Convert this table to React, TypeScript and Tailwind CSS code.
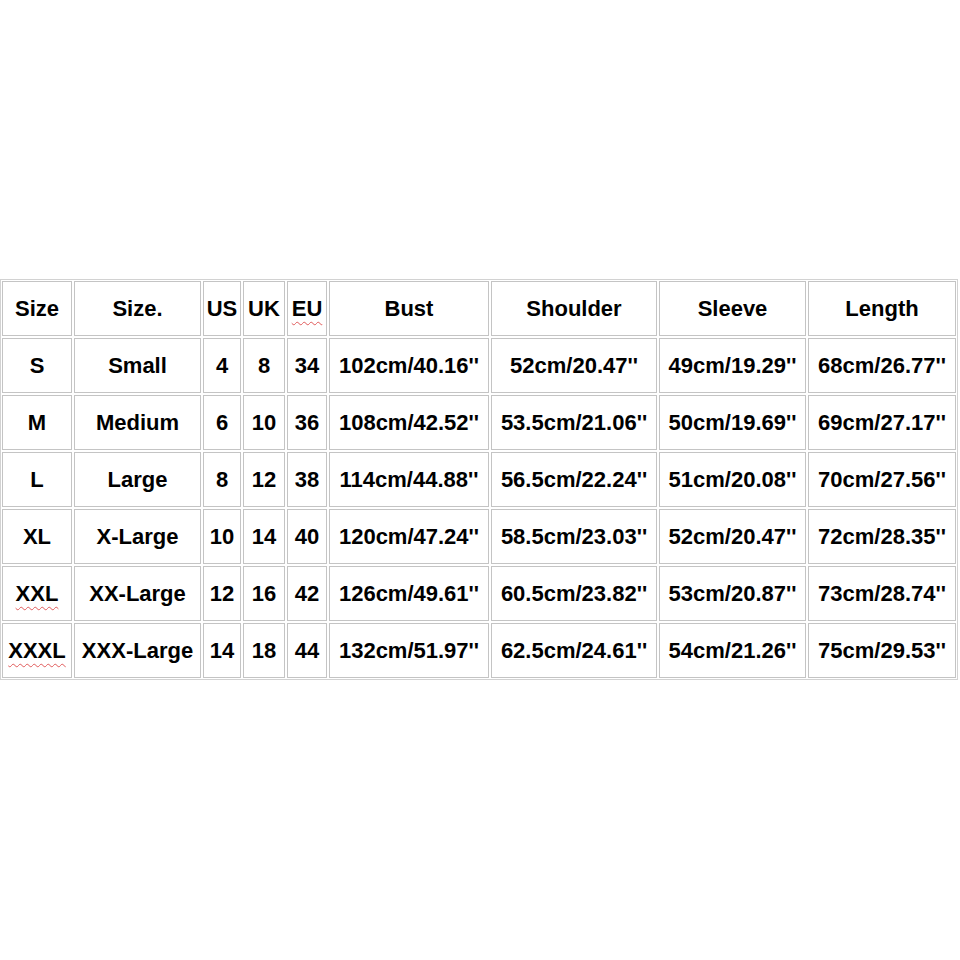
import React from "react";

const header = ["Size", "Size.", "US", "UK", "EU", "Bust", "Shoulder", "Sleeve", "Length"];
const rows: string[][] = [
  ["S", "Small", "4", "8", "34", "102cm/40.16''", "52cm/20.47''", "49cm/19.29''", "68cm/26.77''"],
  ["M", "Medium", "6", "10", "36", "108cm/42.52''", "53.5cm/21.06''", "50cm/19.69''", "69cm/27.17''"],
  ["L", "Large", "8", "12", "38", "114cm/44.88''", "56.5cm/22.24''", "51cm/20.08''", "70cm/27.56''"],
  ["XL", "X-Large", "10", "14", "40", "120cm/47.24''", "58.5cm/23.03''", "52cm/20.47''", "72cm/28.35''"],
  ["XXL", "XX-Large", "12", "16", "42", "126cm/49.61''", "60.5cm/23.82''", "53cm/20.87''", "73cm/28.74''"],
  ["XXXL", "XXX-Large", "14", "18", "44", "132cm/51.97''", "62.5cm/24.61''", "54cm/21.26''", "75cm/29.53''"],
];

const squiggly = new Set(["EU", "XXL", "XXXL"]);

function Cell({ text, first }: { text: string; first: boolean }) {
  const sq = first && squiggly.has(text);
  return (
    <div className="h-[55px] flex items-center justify-center border border-[#c4c4c4] bg-white whitespace-nowrap overflow-visible">
      <span
        className={
          sq
            ? "underline decoration-wavy decoration-[#e05a5a] decoration-1 underline-offset-[5px]"
            : ""
        }
      >
        {text}
      </span>
    </div>
  );
}

export default function App() {
  const all = [header, ...rows];
  return (
    <div className="w-[960px] h-[960px] bg-white pt-[279px] text-black" style={{ fontFamily: '"Liberation Sans", Arial, sans-serif' }}>
      <div className="w-[958px] border border-[#d2d2d2] p-[0px]">
        <div className="grid grid-cols-[70px_127px_38px_42px_40px_160px_166px_147px_148px] gap-[2px] p-[1px] text-[22px] font-bold">
          {all.map((r, ri) =>
            r.map((c, ci) => (
              <Cell key={ri + "-" + ci} text={c} first={ri === 0 ? c === "EU" : ci === 0} />
            ))
          )}
        </div>
      </div>
    </div>
  );
}
